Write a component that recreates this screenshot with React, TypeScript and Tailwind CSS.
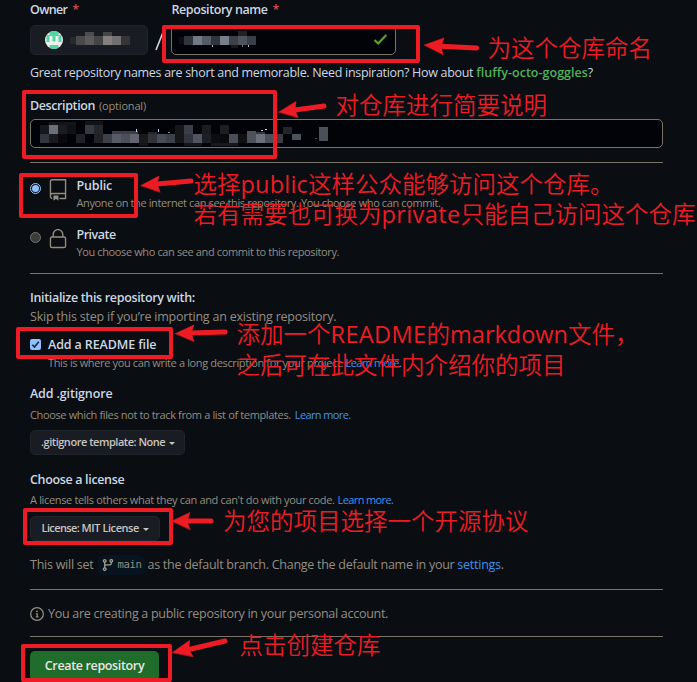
import type { ReactNode } from "react";

type Block = [x: number, y: number, w: number, h: number, fill: string];

const ownerBlocks: Block[] = [
  [85, 32, 9, 4, "#4f4c4d"], [103, 32, 9, 4, "#464548"],
  [70, 37, 6, 7, "#29282b"], [76, 36, 9, 9, "#4a494c"], [85, 36, 9, 9, "#5c5a5b"], [94, 36, 9, 9, "#454447"],
  [103, 36, 9, 9, "#858080"], [112, 36, 9, 9, "#726f70"], [121, 36, 9, 9, "#353538"],
];

const nameBlocks: Block[] = [
  [179, 37, 5, 7, "#0d0e12"], [184, 36, 9, 9, "#30343b"], [193, 36, 9, 9, "#717b86"], [202, 36, 9, 9, "#555c66"],
  [211, 36, 9, 9, "#30343c"], [220, 36, 9, 9, "#75808b"], [229, 36, 9, 9, "#3c4149"], [238, 36, 9, 9, "#4d545d"],
  [247, 36, 9, 9, "#3a3f47"], [238, 31, 9, 5, "#202227"], [231, 45, 7, 3, "#15171b"],
  [211.5, 45, 1.3, 2, "#aab4be"], [241.5, 45, 1, 2, "#717b86"], [248, 45, 1.2, 2, "#aab4be"],
];

const upper: Record<number, string> = {
  0: "#17181c", 1: "#6a6f78", 2: "#1b1c20", 3: "#101115", 5: "#363a42", 6: "#24262b",
  15: "#14161a", 16: "#3a3f47", 18: "#1a1c20", 20: "#1c1e22",
};
const lower: Record<number, string> = {
  0: "#33363c", 1: "#1a1b1f", 2: "#0a0a0e", 4: "#1f2227", 6: "#1f2126", 7: "#3c4048", 8: "#565b65", 9: "#4a4f59",
  10: "#60656f", 11: "#17191d", 12: "#30333a", 13: "#464b54", 14: "#3c4149", 15: "#14161a", 16: "#30343c",
  17: "#50555f", 18: "#1c1f25", 19: "#0c0d11", 20: "#0a0a0e", 21: "#4a4f57", 22: "#0f1115", 23: "#4c525b",
  24: "#6a7079", 25: "#4a5058", 26: "#3a3f46",
};
const descBlocks: Block[] = [
  ...Object.entries(upper).map(([k, c]): Block => [40 + 9 * +k, 125, 9, 9, c]),
  ...Object.entries(lower).map(([k, c]): Block => [40 + 9 * +k, 134, 9, 9, c]),
  [49, 122, 27, 3, "#141518"], [85, 121, 18, 4, "#121317"],
  [112, 131, 26, 3, "#3a3e46"], [148, 132, 9, 2, "#24272d"], [247, 131, 9, 3, "#4c525b"], [256, 132, 9, 2, "#333840"],
  [139, 143, 9, 3, "#141518"], [184, 143, 18, 2.5, "#141518"], [211, 143, 27, 2.5, "#17181c"],
  [136, 129, 1, 3, "#c6d0da"], [158, 129, 1, 2.5, "#c6d0da"], [168, 132, 1.5, 1, "#8a929c"],
  [261, 130, 2, 1, "#c6d0da"], [265, 129, 2, 1, "#c6d0da"],
  [283, 127, 9, 7, "#23252d"], [292, 134, 9, 6, "#4c525a"], [315, 138, 2, 1, "#4c525a"], [319, 127, 9, 14, "#4a5058"],
];

function Mosaic({ blocks }: { blocks: Block[] }) {
  return (
    <g shapeRendering="crispEdges">
      {blocks.map(([x, y, w, h, fill], i) => (
        <rect key={i} x={x} y={y} width={w} height={h} fill={fill} />
      ))}
    </g>
  );
}

type ArrowProps = { tip: string; a: string; b: string; neck: string; end: string };

function Arrow({ tip, a, b, neck, end }: ArrowProps) {
  return (
    <g fill="#ed1c24" stroke="#ed1c24" strokeLinecap="round">
      <path d={`M${neck} L${end}`} strokeWidth="5" />
      <path d={`M${tip} L${a} L${neck} L${b} Z`} strokeWidth="0.6" />
    </g>
  );
}

function Frame({ className }: { className: string }) {
  return <div className={`absolute rounded-[2px] border-4 border-[#ed1c24] ${className}`} />;
}

function Note({ className, children }: { className: string; children: ReactNode }) {
  return (
    <div
      className={`absolute whitespace-nowrap font-['Open_Sans','Noto_Sans_CJK_SC',sans-serif] text-[23.5px] leading-[30px] font-[350] text-[#ed1c24] ${className}`}
    >
      {children}
    </div>
  );
}

const strong = "text-[12.5px] font-semibold text-[#cbd8e4]";
const muted = "text-[11px] text-[#958d81]";
const link = "text-[#3f93ee]";

function Caret() {
  return <span className="ml-[4px] mt-[2px] border-x-[3px] border-t-[3px] border-x-transparent border-t-[#c8c4c0]" />;
}

function Rule() {
  return <div className="h-px shrink-0 bg-[#7a7264]" />;
}

function RepoIcon() {
  return (
    <svg width="22" height="22" viewBox="0 0 24 24" fill="#958d81">
      <path d="M3 2.75A2.75 2.75 0 0 1 5.75 0h14.5a.75.75 0 0 1 .75.75v20.5a.75.75 0 0 1-.75.75h-6a.75.75 0 0 1 0-1.5h5.25v-4H6A1.5 1.5 0 0 0 4.5 18v.75c0 .716.43 1.334 1.05 1.605a.75.75 0 0 1-.6 1.374A3.251 3.251 0 0 1 3 18.75ZM19.5 1.5H5.75c-.69 0-1.25.56-1.25 1.25v12.651A2.989 2.989 0 0 1 6 15h13.5Z" />
      <path d="M7 18.25a.25.25 0 0 1 .25-.25h5a.25.25 0 0 1 .25.25v5.01a.25.25 0 0 1-.397.201l-2.206-1.604a.25.25 0 0 0-.294 0L7.397 23.46a.25.25 0 0 1-.397-.2v-5.01Z" />
    </svg>
  );
}

function LockIcon() {
  return (
    <svg width="22" height="22" viewBox="0 0 24 24" fill="#958d81">
      <path d="M6 9V7.25C6 3.845 8.503 1 12 1s6 2.845 6 6.25V9h.5a2.5 2.5 0 0 1 2.5 2.5v8a2.5 2.5 0 0 1-2.500 2.500h-13A2.500 2.500 0 0 1 3 19.500v-8A2.500 2.500 0 0 1 5.500 9Zm-1.500 2.500v8a1 1 0 0 0 1 1h13a1 1 0 0 0 1-1v-8a1 1 0 0 0-1-1h-13a1 1 0 0 0-1 1Zm3-4.250V9h9V7.250c0-2.670-1.922-4.750-4.500-4.750-2.578 0-4.500 2.080-4.500 4.750Z" />
    </svg>
  );
}

function BranchIcon() {
  return (
    <svg width="14" height="14" viewBox="0 0 16 16" fill="#a39b8e">
      <path d="M9.5 3.25a2.25 2.25 0 1 1 3 2.122V6A2.5 2.5 0 0 1 10 8.5H6a1 1 0 0 0-1 1v1.128a2.251 2.251 0 1 1-1.5 0V5.372a2.25 2.25 0 1 1 1.5 0v1.836A2.493 2.493 0 0 1 6 7h4a1 1 0 0 0 1-1v-.628A2.25 2.25 0 0 1 9.5 3.25Zm-6 0a.75.75 0 1 0 1.5 0 .75.75 0 0 0-1.5 0Zm8.25-.75a.75.75 0 1 0 0 1.5.75.75 0 0 0 0-1.5ZM4.25 12a.75.75 0 1 0 0 1.5.75.75 0 0 0 0-1.5Z" />
    </svg>
  );
}

function InfoIcon() {
  return (
    <svg width="14" height="14" viewBox="0 0 16 16" fill="#958d81">
      <path d="M0 8a8 8 0 1 1 16 0A8 8 0 0 1 0 8Zm8-6.5a6.5 6.5 0 1 0 0 13 6.5 6.5 0 0 0 0-13ZM6.5 7.75A.75.75 0 0 1 7.25 7h1a.75.75 0 0 1 .75.75v2.75h.25a.75.75 0 0 1 0 1.5h-2a.75.75 0 0 1 0-1.5h.25v-2h-.25a.75.75 0 0 1-.75-.75ZM8 6a1 1 0 1 1 0-2 1 1 0 0 1 0 2Z" />
    </svg>
  );
}

function Avatar() {
  return (
    <svg width="18" height="18" viewBox="0 0 18 18">
      <clipPath id="avatar">
        <circle cx="9" cy="9" r="9" />
      </clipPath>
      <g clipPath="url(#avatar)">
        <rect width="18" height="18" fill="#f0efee" />
        <path
          d="M4.500 0h9v4h3v7h-3V5h-3v5.500h-3V5h-3v6h-3V4h3ZM4.500 14h9v4h-9Z"
          fill="#4fd6a4"
        />
      </g>
    </svg>
  );
}

export default function App() {
  return (
    <main className="relative h-[682px] w-[697px] overflow-hidden bg-[#0a0d12] font-['Open_Sans','Noto_Sans',sans-serif]">
      <form className="flex w-[663px] flex-col whitespace-nowrap pl-[30px]">
        <div className="flex h-[19px] items-center pt-[2px]">
          <div className={`w-[141.500px] ${strong}`}>
            <span className="tracking-[-0.69px]">Owner</span>
            <span className="ml-[5px] text-[#d2504c]">*</span>
          </div>
          <div className={strong}>
            <span className="tracking-[-0.42px]">Repository name</span>
            <span className="ml-[5px] text-[#d2504c]">*</span>
          </div>
        </div>
        <div className="flex h-[42px] items-center">
          <div className="flex h-[30px] w-[118px] items-center rounded-[5px] border border-[#20242b] bg-[#1a1c23] pl-[14px]">
            <Avatar />
          </div>
          <svg className="ml-[6px]" width="12" height="22" viewBox="0 0 12 22">
            <path d="M2 21 L9.500 2" stroke="#cbd8e4" strokeWidth="1.600" />
          </svg>
          <div className="ml-[5px] flex h-[29px] w-[225px] items-center justify-end rounded-[5px] border border-[#7a7264] bg-[#020308] pr-[7px]">
            <svg width="15" height="12" viewBox="0 0 15 12">
              <path d="M1.500 6 L5.200 9.500 L13.300 1.100" fill="none" stroke="#54a82f" strokeWidth="2.200" />
            </svg>
          </div>
        </div>
        <p className="flex h-6 items-center whitespace-pre text-[12.5px] text-[#cbd8e4]">
          <span className="tracking-[-0.31px]">Great repository names are short and memorable. Need inspiration? How about </span>
          <span className="font-semibold tracking-[0.02px] text-[#50b25a]">fluffy-octo-goggles</span>?
        </p>
        <div className="mt-[6px] flex h-7 items-center gap-1 pt-[2px]">
          <span className={`tracking-[-0.39px] ${strong}`}>Description</span>
          <span className={`tracking-[-0.18px] ${muted}`}>(optional)</span>
        </div>
        <div className="h-[29px] rounded-[5px] border border-[#7a7264] bg-[#020308]" />
        <div className="h-[14px]" />
        <Rule />

        <div className="flex h-[60px] pt-[13px]">
          <span className="mt-[7px] flex size-[11px] items-center justify-center rounded-full border border-[#9ac7ff]">
            <span className="size-[7px] rounded-full bg-[#8fc0ff]" />
          </span>
          <span className="ml-[6px] mt-[3px]">
            <RepoIcon />
          </span>
          <span className="ml-[7.500px] mt-px flex flex-col">
            <span className={`h-[18px] leading-[18px] tracking-[-0.17px] ${strong}`}>Public</span>
            <span className={`h-4 leading-4 tracking-[-0.38px] ${muted}`}>
              Anyone on the internet can see this repository. You choose who can commit.
            </span>
          </span>
        </div>
        <div className="flex h-[50px] pt-[2px]">
          <span className="mt-[7px] size-[11px] rounded-full border border-[#77736e] bg-[#3b3b3b]" />
          <span className="ml-[6px] mt-[3px]">
            <LockIcon />
          </span>
          <span className="ml-[7.500px] mt-px flex flex-col">
            <span className={`h-[18px] leading-[18px] tracking-[-0.51px] ${strong}`}>Private</span>
            <span className={`h-4 leading-4 tracking-[-0.38px] ${muted}`}>
              You choose who can see and commit to this repository.
            </span>
          </span>
        </div>
        <Rule />

        <div className={`mt-[14px] h-[19px] leading-[19px] tracking-[-0.33px] ${strong}`}>
          Initialize this repository with:
        </div>
        <p className="h-5 text-[12.5px] leading-5 tracking-[-0.22px] text-[#958d81]">
          Skip this step if you’re importing an existing repository.
        </p>
        <div className="mt-[8px] flex h-[19px] items-center">
          <span className="flex size-[11px] items-center justify-center rounded-[2px] bg-[#8fc0ff]">
            <svg width="9" height="9" viewBox="0 0 9 9">
              <path d="M1.300 4.800 L3.500 7 L7.800 1.800" fill="none" stroke="#1b2430" strokeWidth="1.600" />
            </svg>
          </span>
          <span className={`ml-[7px] pt-px tracking-[-0.12px] ${strong}`}>Add a README file</span>
        </div>
        <p className={`h-[17px] whitespace-pre pl-[18px] leading-[17px] ${muted}`}>
          <span className="tracking-[-0.360px]">This is where you can write a long description for your project. </span>
          <span className={`tracking-[-0.62px] ${link}`}>Learn more.</span>
        </p>
        <div className={`mt-[13px] h-5 leading-5 tracking-[-0.14px] ${strong}`}>Add .gitignore</div>
        <p className={`mt-[2px] flex h-[18px] items-center gap-[4px] ${muted}`}>
          <span className="tracking-[-0.36px]">Choose which files not to track from a list of templates.</span>
          <span className={`tracking-[-0.62px] ${link}`}>Learn more.</span>
        </p>
        <div className="mt-[6px] flex h-[25px] w-[155px] items-center rounded-[5px] border border-[#20242b] bg-[#1a1c23] pl-[10px] text-[11px] font-semibold text-[#c8c4c0]">
          <span className="whitespace-pre tracking-[-0.47px]">.gitignore template: </span>
          <span className="tracking-[-0.54px]">None</span>
          <Caret />
        </div>
        <div className={`mt-[15px] h-5 leading-5 tracking-[-0.34px] ${strong}`}>Choose a license</div>
        <p className={`mt-[1px] flex h-[18px] items-center gap-[3px] ${muted}`}>
          <span className="tracking-[-0.34px]">A license tells others what they can and can't do with your code.</span>
          <span className={`tracking-[-0.62px] ${link}`}>Learn more.</span>
        </p>
        <div className="mt-[7px] flex h-[25px] w-[130px] items-center rounded-[5px] border border-[#20242b] bg-[#1a1c23] pl-[10.500px] text-[11px] font-semibold text-[#c8c4c0]">
          <span className="whitespace-pre tracking-[-0.60px]">License: </span>
          <span className="tracking-[-0.42px]">MIT License</span>
          <Caret />
        </div>
        <p className="mt-[14px] flex h-5 items-center text-[12.500px] text-[#958d81]">
          <span className="tracking-[-0.25px]">This will set</span>
          <span className="ml-[4px] flex h-5 w-[47px] items-center rounded-[5px] bg-[#07131f] pl-[3px]">
            <BranchIcon />
            <span className="ml-[3px] font-['DejaVu_Sans_Mono',monospace] text-[10.500px] tracking-[-0.32px]">main</span>
          </span>
          <span className="ml-[3px] whitespace-pre tracking-[-0.270px]">
            as the default branch. Change the default name in your{" "}
          </span>
          <span className={`tracking-[-0.25px] ${link}`}>settings</span>.
        </p>
        <div className="h-[14px]" />
        <Rule />
        <p className="mt-[14px] flex h-5 items-center gap-[4px] text-[12.500px] text-[#958d81]">
          <InfoIcon />
          <span className="tracking-[-0.28px]">You are creating a public repository in your personal account.</span>
        </p>
        <div className="h-[12px]" />
        <Rule />
        <div className="mt-[14px] flex h-[30px] w-[129px] items-center justify-center rounded-[5px] bg-[#1f6c2b] text-[12.500px] font-semibold tracking-[-0.35px] text-[#eae6e2]">
          Create repository
        </div>
      </form>

      <svg className="absolute inset-0" width="697" height="682" viewBox="0 0 697 682">
        <Mosaic blocks={ownerBlocks} />
        <Mosaic blocks={nameBlocks} />
        <Mosaic blocks={descBlocks} />
        <Arrow tip="424.500,45" a="444,38" neck="441,46.200" b="443,54.500" end="476.500,48" />
        <Arrow tip="279,112" a="296,101.500" neck="295,110" b="298,117.500" end="324,106" />
        <Arrow tip="141,185.500" a="159,176" neck="157,184" b="160,192" end="191,181" />
        <Arrow tip="175.500,333.500" a="194,325" neck="191,333" b="194,341.500" end="225,332" />
        <Arrow tip="172,521" a="190,512.500" neck="187,521" b="190,529.500" end="211,521" />
        <Arrow tip="172.500,652.500" a="189.500,640.500" neck="189,649.500" b="193,656.500" end="225,641" />
      </svg>

      <Frame className="left-[162px] top-[25px] h-[38px] w-[258px]" />
      <Frame className="left-[22px] top-[90px] h-[69px] w-[255px]" />
      <Frame className="left-[19px] top-[173px] h-[45px] w-[119px]" />
      <Frame className="left-[16px] top-[327px] h-[32px] w-[157px]" />
      <Frame className="left-[23px] top-[508px] h-[37px] w-[150px]" />
      <Frame className="left-[21px] top-[644px] h-[38px] w-[151px]" />

      <Note className="left-[487.500px] top-[33px]">为这个仓库命名</Note>
      <Note className="left-[335.500px] top-[90px]">对仓库进行简要说明</Note>
      <Note className="left-[193.500px] top-[169px]">
        选择<span className="font-normal tracking-[0.2px]">public</span>这样公众能够访问这个仓库。
      </Note>
      <Note className="left-[193.500px] top-[199px]">
        若有需要也可换为<span className="font-normal tracking-[0.4px]">private</span>只能自己访问这个仓库
      </Note>
      <Note className="left-[236.500px] top-[319px]">
        添加一个<span className="font-normal tracking-[0.4px]">README</span>的
        <span className="font-normal">markdown</span>文件，
      </Note>
      <Note className="left-[236.500px] top-[350px]">之后可在此文件内介绍你的项目</Note>
      <Note className="left-[223px] top-[506px]">为您的项目选择一个开源协议</Note>
      <Note className="left-[239.500px] top-[630px]">点击创建仓库</Note>
    </main>
  );
}
